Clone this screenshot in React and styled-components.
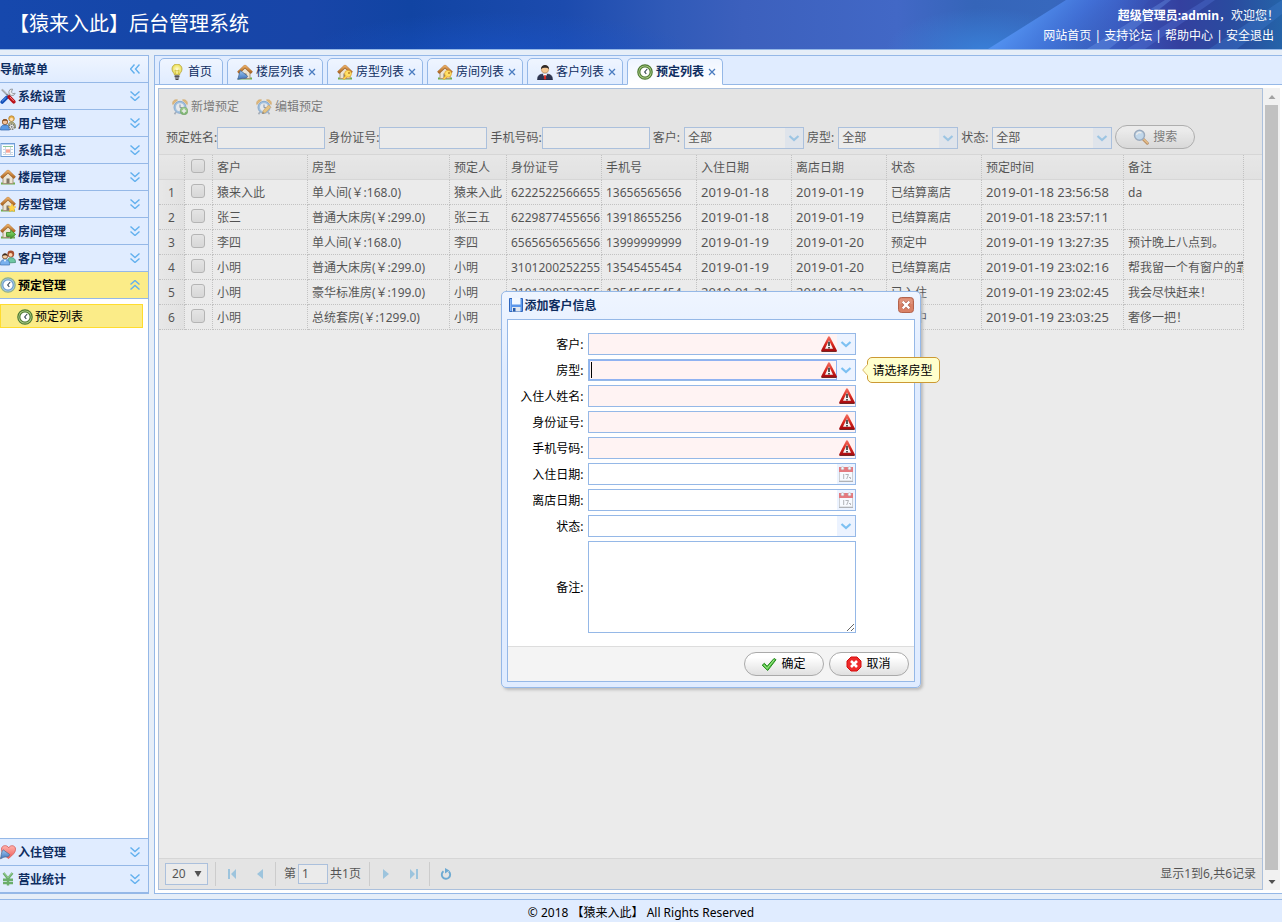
import React from "react";
import styled, { createGlobalStyle, css } from "styled-components";

const LINE = "#95b8e7";
const PANEL = "#e0ecff";
const NAVY = "#0e2d5f";
const FONT = '"Noto Sans", "Noto Sans CJK SC", sans-serif';

const GlobalStyle = createGlobalStyle`
  *, *::before, *::after { box-sizing: border-box; }
  body { margin: 0; background: #e6eef8; color: #000; font: 12px/20px ${FONT}; }
  button, input, select, textarea { margin: 0; color: inherit; font: inherit; border-radius: 0; outline: none; }
  a { color: inherit; text-decoration: none; }
  svg { display: block; flex: none; }
`;

/* ---------- page frame ---------- */

const Page = styled.div`
  display: flex;
  flex-direction: column;
  height: 100vh;
  min-height: 640px;
`;

const Header = styled.header`
  position: relative;
  flex: none;
  display: flex;
  align-items: center;
  justify-content: space-between;
  height: 50px;
  padding: 0 3px 2px 9px;
  overflow: hidden;
  color: #fff;
  background: #1246a9;
  border-bottom: 1px solid ${LINE};
`;

const HeaderArt = styled.svg`
  position: absolute;
  inset: 0;
  width: 100%;
  height: 100%;
`;

const SiteTitle = styled.h1`
  position: relative;
  margin: 0;
  font-size: 20px;
  font-weight: 400;
`;

const UserArea = styled.div`
  position: relative;
  padding-top: 4px;
  text-align: right;
  white-space: pre;
`;

const TopLinks = styled.nav`
  padding-right: 5px;
`;

const Main = styled.div`
  flex: 1;
  display: flex;
  gap: 5px;
  min-height: 0;
  margin: 5px 0;
`;

const Footer = styled.footer`
  flex: none;
  height: 23px;
  padding-top: 3px;
  text-align: center;
  background: ${PANEL};
  border-top: 1px solid ${LINE};
`;

/* ---------- sidebar ---------- */

const Sidebar = styled.aside`
  flex: none;
  display: flex;
  flex-direction: column;
  width: 149px;
  background: #fff;
  border: solid ${LINE};
  border-width: 1px 1px 1px 0;
`;

const SideRow = styled.button`
  flex: none;
  display: flex;
  align-items: center;
  gap: 2px;
  width: 100%;
  height: 27px;
  padding: 0 8px 0 0;
  border: 0;
  border-bottom: 1px solid ${LINE};
  color: ${(p) => (p.$active ? "#000" : NAVY)};
  background: ${(p) => (p.$active ? "#fbec88" : PANEL)};
  font-weight: 700;
  text-align: left;
  cursor: pointer;

  span { flex: 1; padding-top: 1px; }
`;

const SideHead = styled(SideRow).attrs({ as: "div" })`
  background: linear-gradient(#eff5ff, ${PANEL});
  cursor: default;
`;

const SideContent = styled.div`
  flex: 1;
  padding: 5px 5px 5px 0;
  border-bottom: 1px solid ${LINE};
`;

const SubItem = styled.a`
  display: flex;
  align-items: center;
  gap: 2px;
  height: 24px;
  padding: 1px 0 0 16px;
  border: 1px solid #ffdc2e;
  background: #fbec88;
`;

/* ---------- tabs ---------- */

const Center = styled.main`
  flex: 1;
  display: flex;
  flex-direction: column;
  min-width: 0;
  background: #fff;
  border: solid ${LINE};
  border-width: 1px 0 1px 1px;
`;

const TabStrip = styled.div`
  flex: none;
  display: flex;
  gap: 4px;
  height: 29px;
  padding: 2px 0 0 4px;
  background: ${PANEL};
  border-bottom: 1px solid ${LINE};
`;

const Tab = styled.div`
  display: flex;
  align-items: center;
  height: 27px;
  padding: 0 10px 0 9px;
  color: ${NAVY};
  background: linear-gradient(#eff5ff, ${PANEL});
  border: 1px solid ${LINE};
  border-radius: 5px 5px 0 0;
  ${(p) =>
    p.$closable &&
    css`
      padding-right: 6px;
    `}
  ${(p) =>
    p.$active &&
    css`
      font-weight: 700;
      background: linear-gradient(#eff5ff, #fff);
      border-bottom-color: #fff;
    `}
`;

const TabLabel = styled.button`
  display: flex;
  align-items: center;
  gap: 3px;
  padding: 0;
  border: 0;
  background: none;
  font-weight: inherit;
  white-space: nowrap;
  cursor: pointer;
`;

const TabClose = styled.button`
  display: flex;
  align-items: center;
  justify-content: flex-end;
  width: 12px;
  height: 16px;
  padding: 0;
  border: 0;
  background: none;
`;

/* ---------- work area ---------- */

const Body = styled.div`
  flex: 1;
  display: flex;
  min-height: 0;
  padding: 3px 2px 3px 3px;
`;

const Panel = styled.section`
  position: relative;
  flex: 1;
  display: flex;
  flex-direction: column;
  min-width: 0;
  background: #fff;
  border: 1px solid ${LINE};
`;

const Toolbar = styled.div`
  flex: none;
  height: 66px;
  background: #f4f4f4;
  border-bottom: 1px solid #ddd;
`;

const Actions = styled.div`
  display: flex;
  gap: 17px;
  padding: 8px 13px 0;
`;

const LinkButton = styled.button`
  display: flex;
  align-items: center;
  gap: 3px;
  height: 20px;
  padding: 0;
  border: 0;
  color: #444;
  background: none;
`;

const Filters = styled.form`
  display: flex;
  align-items: flex-end;
  gap: 3px;
  margin-top: 8px;
  padding-left: 7px;
`;

const Filter = styled.label`
  display: flex;
  align-items: center;
  gap: ${(p) => (p.$spaced ? "4px" : "0")};
  white-space: nowrap;
`;

const FilterInput = styled.input`
  width: 108px;
  height: 22px;
  padding: 0 3px;
  background: #fff;
  border: 1px solid ${LINE};
`;

const PillButton = styled.button`
  display: flex;
  align-items: center;
  justify-content: center;
  gap: 4px;
  width: 80px;
  height: 24px;
  padding: 0;
  color: ${(p) => (p.$muted ? "#444" : "#000")};
  background: linear-gradient(#fff 20%, #e0e0e0);
  border: 1px solid ${(p) => (p.$muted ? "#999" : "#aaa")};
  border-radius: 12px;
`;

const SearchSlot = styled.div`
  align-self: flex-start;
`;

/* ---------- drop-downs and text boxes ---------- */

const Frame = styled.div`
  position: relative;
  display: grid;
  grid-template: 20px / 1fr 18px;
  width: ${(p) => p.$width}px;
  height: 22px;
  background: ${(p) => (p.$required ? "#fff3f3" : "#fff")};
  border: 1px solid ${LINE};

  > * { grid-row: 1; }
`;

const control = css`
  grid-column: 1 / 3;
  width: 100%;
  min-width: 0;
  height: 20px;
  padding: 0 3px;
  border: 0;
  background: transparent;
  appearance: none;
`;

const SelectControl = styled.select`
  ${control}
`;

const TextControl = styled.input`
  ${control}
`;

const Addon = styled.span`
  grid-column: 2;
  display: grid;
  place-items: center;
  background: #ecf3ff;
  pointer-events: none;
`;

const Warn = styled.span`
  grid-column: ${(p) => (p.$inner ? 1 : 2)};
  justify-self: end;
  align-self: center;
  pointer-events: none;
`;

const FocusRing = styled.span`
  grid-column: 1;
  border: 1px solid #8fb2f2;
  pointer-events: none;

  &::after {
    content: "";
    display: block;
    width: 1px;
    height: 16px;
    margin: 1px;
    background: #000;
  }
`;

/* ---------- grid ---------- */

const GridArea = styled.div`
  flex: 1;
  min-height: 0;
  overflow: hidden;
`;

const Table = styled.table`
  width: 100%;
  table-layout: fixed;
  border-collapse: separate;
  border-spacing: 0;
`;

const cell = css`
  height: 25px;
  padding: 2px 4px 0;
  overflow: hidden;
  font-weight: 400;
  text-align: left;
  white-space: nowrap;
  border-right: 1px dotted #bbb;

  &:last-child { border-right: 0; }
`;

const Th = styled.th`
  ${cell}
  background: linear-gradient(#f9f9f9, #efefef);
  border-bottom: 1px solid #ddd;
`;

const Td = styled.td`
  ${cell}
  padding-top: ${(p) => (p.$date ? "0" : "2px")};
  border-bottom: 1px dotted #bbb;
  font-size: ${(p) => (p.$date ? "13px" : "12px")};

  &:last-child { border-bottom: 0; }
`;

const NumberCell = styled(Td)`
  padding: 2px 0 0;
  text-align: center;
  background: linear-gradient(90deg, #f9f9f9, #efefef);
`;

const Tick = styled.input`
  display: block;
  width: 14px;
  height: 14px;
  margin: 0 0 4px 2px;
  appearance: none;
  background: linear-gradient(#f4f4f4, #dedede);
  border: 1px solid #a4a4a4;
  border-radius: 3px;
`;

/* ---------- pager ---------- */

const Pager = styled.div`
  flex: none;
  display: flex;
  align-items: center;
  height: 31px;
  padding: 0 6px;
  background: #f4f4f4;
  border-top: 1px solid #ddd;
`;

const PageSize = styled.label`
  position: relative;
  width: 43px;
  height: 22px;
  margin-right: 7px;

  svg { position: absolute; right: 6px; top: 7px; pointer-events: none; }
`;

const PageSizeSelect = styled.select`
  width: 100%;
  height: 100%;
  padding: 0 6px;
  appearance: none;
  background: #fff;
  border: 1px solid ${LINE};
`;

const PagerRule = styled.span`
  width: 1px;
  height: 24px;
  background: #ccc;
`;

const PagerButton = styled.button`
  display: grid;
  place-items: center;
  width: 28px;
  height: 24px;
  padding: 0;
  border: 0;
  background: none;
`;

const PagerGroup = styled.div`
  display: flex;
  align-items: center;
  padding: 0 1px 0 2px;
`;

const PageNo = styled.label`
  display: flex;
  align-items: center;
  gap: 2px;
  padding: 0 8px;
`;

const PageInput = styled.input`
  width: 30px;
  height: 20px;
  padding: 0 3px;
  background: #fff;
  border: 1px solid ${LINE};
`;

const PagerInfo = styled.div`
  margin-left: auto;
`;

/* ---------- scrollbar ---------- */

const ScrollTrack = styled.div`
  flex: none;
  display: flex;
  flex-direction: column;
  align-items: center;
  width: 17px;
  background: #f1f1f1;
`;

const ScrollArrow = styled.span`
  display: grid;
  place-items: center;
  width: 17px;
  height: 17px;
`;

const ScrollThumb = styled.span`
  flex: 1;
  width: 13px;
  margin-bottom: 3px;
  background: #c1c1c1;
`;

/* ---------- dialog ---------- */

const Mask = styled.div`
  position: absolute;
  inset: -1px;
  background: #ccc;
  opacity: 0.4;
`;

const DialogLayer = styled.div`
  position: absolute;
  inset: 0;
  display: flex;
  align-items: center;
  justify-content: center;
`;

const Dialog = styled.div`
  width: 420px;
  padding: 5px;
  background: linear-gradient(#eff5ff, ${PANEL} 20%);
  border: 1px solid ${LINE};
  border-radius: 5px;
  box-shadow: 2px 2px 3px #bbb;
`;

const DialogTitle = styled.div`
  display: flex;
  align-items: center;
  height: 22px;
  padding: 0 1px 5px 2px;
  color: ${NAVY};
  font-weight: 700;

  h2 { flex: 1; margin: 0; padding-top: 1px; font-size: 12px; }
`;

const CloseButton = styled.button`
  display: block;
  padding: 0;
  border: 0;
  background: none;
`;

const DialogBox = styled.div`
  background: #fff;
  border: 1px solid ${LINE};
`;

const Form = styled.form`
  display: grid;
  gap: 4px;
  padding: 13px 0;
`;

const Field = styled.div`
  display: grid;
  grid-template-columns: 76px 268px;
  gap: 4px;
  align-items: center;

  > label { padding-top: 2px; text-align: right; }
`;

const Remark = styled.textarea`
  display: block;
  width: 268px;
  height: 92px;
  padding: 3px;
  background: #fff;
  border: 1px solid ${LINE};
`;

const DialogFooter = styled.div`
  display: flex;
  justify-content: flex-end;
  gap: 5px;
  padding: 5px;
  background: #f4f4f4;
  border-top: 1px solid #ddd;
`;

const Tip = styled.div`
  position: absolute;
  left: 278px;
  top: -3px;
  height: 26px;
  padding: 3px 6px 0 5px;
  white-space: nowrap;
  background: #ffffcc;
  border: 1px solid #cc9933;
  border-radius: 5px;

  svg { position: absolute; left: -6px; top: 6px; }
`;

/* ---------- icons ---------- */

const Svg = ({ size = 16, children, ...rest }) => (
  <svg width={size} height={size} viewBox={`0 0 ${size} ${size}`} fill="none" aria-hidden="true" {...rest}>
    {children}
  </svg>
);

const HiddenDefs = styled.svg`
  position: absolute;
  width: 0;
  height: 0;
`;

const Defs = () => (
  <HiddenDefs aria-hidden="true">
    <defs>
      <linearGradient id="red" x2="0" y2="1"><stop stopColor="#f0685a" /><stop offset=".5" stopColor="#dc2a20" /><stop offset="1" stopColor="#a80c10" /></linearGradient>
      <linearGradient id="roof" x2="0" y2="1"><stop stopColor="#e8ad66" /><stop offset="1" stopColor="#b26a26" /></linearGradient>
      <linearGradient id="green" x2="0" y2="1"><stop stopColor="#8fdc72" /><stop offset="1" stopColor="#3c9a2a" /></linearGradient>
      <linearGradient id="blue" x2="0" y2="1"><stop stopColor="#9cc7f2" /><stop offset="1" stopColor="#3f74bd" /></linearGradient>
      <linearGradient id="heart" x2="0" y2="1"><stop stopColor="#ffb3ad" /><stop offset="1" stopColor="#ee5a58" /></linearGradient>
      <radialGradient id="bulb"><stop stopColor="#fffde0" /><stop offset="1" stopColor="#ecdf4c" /></radialGradient>
    </defs>
  </HiddenDefs>
);

const HouseShape = () => (
  <>
    <path d="M1 14.5h14" stroke="#6fae4c" strokeWidth="2" />
    <path d="M3 8l5-4.600L13 8v6.500H3z" fill="#ece4d4" stroke="#a9977d" />
    <path d="M6.500 14.500V9.500h3v5z" fill="#7f7466" />
    <path d="M1.200 8.800L8 2.400l6.800 6.400" stroke="#a5682c" strokeWidth="3" strokeLinejoin="round" />
    <path d="M1.400 8.300L8 2.100l6.600 6.200" stroke="url(#roof)" strokeWidth="2" strokeLinejoin="round" />
  </>
);

const House = () => <Svg><HouseShape /></Svg>;
const HouseStar = () => (
  <Svg><HouseShape /><path d="M12 7.800l1.300 2.600 2.700.4-2 2 .5 2.900-2.500-1.300-2.500 1.300.5-2.900-2-2 2.700-.4z" fill="#ffd54a" stroke="#f0b12c" strokeWidth=".5" /></Svg>
);
const HouseGo = () => (
  <Svg><HouseShape /><path d="M6.500 9.500h4.200V7.200L15.600 11.400l-4.900 4.200v-2.300H6.500z" fill="url(#green)" stroke="#388421" strokeWidth=".8" /></Svg>
);
const HouseKey = () => (
  <Svg>
    <HouseShape />
    <circle cx="11" cy="9.800" r="3.400" fill="#ffe067" stroke="#e0a632" strokeWidth=".8" />
    <circle cx="12" cy="8.900" r="1" fill="#b98426" />
    <path d="M8.800 11.500l-3 3.100 1.500 1 3.100-3" fill="#ffd34d" stroke="#e0a632" strokeWidth=".7" />
  </Svg>
);
const HousePaint = () => (
  <Svg><HouseShape /><path d="M3.500 6.500l7.300 5.800c-1 2.400-3.600 2-5.400 2.100-1.600 0-2.800.8-4.900.9C2 13.200 1.600 9.600 3.500 6.500z" fill="url(#blue)" stroke="#43648e" strokeWidth=".7" /></Svg>
);
const Tools = () => (
  <Svg>
    <path d="M12.500 1a3.300 3.300 0 1 0 2.700 4.300l-2.400.3-1.300-1.500z" fill="#e9ecef" stroke="#858a91" strokeWidth=".8" />
    <path d="M1.800 1.300l7.500 7.500" stroke="#7f858c" strokeWidth="1.700" />
    <path d="M1.600 1l5 5" stroke="#eef0f2" strokeWidth=".7" />
    <path d="M10 6.500L7.300 9" stroke="#9da2a8" strokeWidth="1.800" />
    <path d="M7 9.300L2.200 14" stroke="#1450b8" strokeWidth="3.600" strokeLinecap="round" />
    <path d="M6.300 9.300L2 13.400" stroke="#6da3f4" strokeWidth="1" />
    <path d="M9.200 8.900l4.600 4.900" stroke="#b80f17" strokeWidth="3.600" strokeLinecap="round" />
    <path d="M9.900 9l4 4.200" stroke="#ff8a86" strokeWidth="1" />
  </Svg>
);
const Users = () => (
  <Svg>
    <circle cx="11.500" cy="3.600" r="2.800" fill="#e9b24c" stroke="#a8752a" strokeWidth=".7" />
    <circle cx="11.500" cy="4.300" r="1.600" fill="#ffe0b8" />
    <path d="M8 13c0-5 1.500-6 3.500-6s4 1 4 6z" fill="#b8b58a" stroke="#77784f" strokeWidth=".7" />
    <circle cx="5" cy="7" r="2.700" fill="#f2c298" stroke="#885022" strokeWidth=".8" />
    <path d="M2.400 6.300C3 3.300 7 3.300 7.600 6.300 6 5.500 4 5.500 2.400 6.300z" fill="#8d5426" />
    <path d="M.5 15c0-4 1.500-5 4.500-5s4.500 1 4.500 5z" fill="#5b9ae4" stroke="#2d63aa" strokeWidth=".7" />
    <circle cx="11.700" cy="11.800" r="2.600" fill="#e8e8e8" stroke="#767676" strokeWidth="1.300" strokeDasharray="1.500 .7" />
    <circle cx="11.700" cy="11.800" r=".9" fill="#777" />
  </Svg>
);
const Clients = () => (
  <Svg>
    <circle cx="10.800" cy="4" r="3.400" fill="#a84f30" />
    <circle cx="10.600" cy="4.800" r="1.900" fill="#ffd5ad" />
    <path d="M7.500 13c0-4.500 1.200-5.300 3.500-5.300s4.500.8 4.500 4.800z" fill="#6fc7a3" stroke="#378467" strokeWidth=".7" />
    <circle cx="5" cy="6.300" r="2.600" fill="#f7cda2" stroke="#6e4a2c" strokeWidth=".8" />
    <path d="M2.300 6c.3-3.500 5-3.500 5.400 0C6.500 5 4 4.900 2.300 6z" fill="#3b2a1e" />
    <path d="M.4 15c0-4.500 1.600-5.300 4.600-5.300s4.600.8 4.600 5.300z" fill="#79b1ee" stroke="#3b71b3" strokeWidth=".7" />
    <path d="M3.800 9.800L5 12l1.200-2.200z" fill="#fff" />
  </Svg>
);
const Log = () => (
  <Svg>
    <rect x="1" y="1.500" width="13.500" height="13" fill="#fff" stroke="#6f9dd6" />
    <path d="M2 2.500h12" stroke="#bdd7f5" />
    <path d="M3 7.500h10M3 10.500h10M3 12.500h10M5.500 5v8M10.500 5v8" stroke="#ccd6e2" />
    <path d="M6 7h4v4H6z" fill="#ffc3b8" />
    <path d="M6 9h4" stroke="#f58575" />
    <path d="M3 4.500h10" stroke="#8cc79a" />
  </Svg>
);
const Clock = ({ ring = "#6d9ccc", inner = "#a8cbe8", edge = "#8fb08a" }) => (
  <Svg>
    <circle cx="8" cy="8" r="7.200" fill={inner} stroke={edge} strokeWidth="1.200" />
    <circle cx="8" cy="8" r="5.200" fill="#fff" stroke={ring} strokeWidth="1.200" />
    <path d="M10.200 5L7.700 8l1.600 1.800" stroke="#345" strokeWidth="1.100" />
  </Svg>
);
const BlueClock = () => <Clock />;
const GreenClock = () => <Clock ring="#4f7b35" inner="#b3d389" edge="#4d7a34" />;
const HeartIcon = () => (
  <Svg>
    <path d="M8.500 14.500C3 10.500 1.500 8 1.500 5.200 1.500 1 7 .5 8.700 3.800 10.300.5 15.600 1.200 15.500 5.200c0 2.800-2 5.300-7 9.300z" fill="url(#heart)" stroke="#d75650" strokeWidth=".8" />
    <path d="M3.200 5.800l6.500 4.700c-.6 2.600-3 2.400-4.700 2.500C3.300 13 2 14.500.3 14.800 1.600 12 .8 8.300 3.200 5.800z" fill="url(#blue)" stroke="#53688b" strokeWidth=".7" />
  </Svg>
);
const Yen = () => (
  <Svg><path d="M3.500 2L8 7.500 12.500 2M8 7v7.500M3 8.800h10M3 12h10" stroke="#6bae6b" strokeWidth="2.400" /><path d="M4 2l4 4.800L12 2" stroke="#a3d3a0" strokeWidth=".8" /></Svg>
);
const Bulb = () => (
  <Svg>
    <path d="M5.500 11c0-2-2.500-3-2.500-6a5 5 0 0 1 10 0c0 3-2.500 4-2.500 6z" fill="url(#bulb)" stroke="#b9a94a" strokeWidth=".9" />
    <path d="M6.500 10L6 6l2 1 2-1-.5 4" stroke="#cdbb38" strokeWidth=".8" />
    <rect x="5.800" y="10.800" width="4.400" height="4.200" rx="1" fill="#8a8a90" />
    <path d="M5.500 12.300h5M6.500 15.500h3" stroke="#46464c" />
  </Svg>
);
const Person = () => (
  <Svg>
    <path d="M.5 16c0-5 2-6 7.500-6s7.500 1 7.500 6z" fill="#2d3552" stroke="#1b2138" strokeWidth=".5" />
    <path d="M5.800 9.800L8 14.500l2.200-4.700z" fill="#fff" />
    <path d="M7.400 11h1.200l.7 3.500L8 16l-1.300-1.500z" fill="#d42a22" />
    <circle cx="8" cy="5.300" r="3.700" fill="#f6c994" stroke="#b3824c" strokeWidth=".6" />
    <path d="M4 5.200C3.500-.5 12.500-.5 12 5.200 10.500 3.300 6 3.300 4 5.200z" fill="#2f2a28" />
  </Svg>
);
const AlarmShape = () => (
  <>
    <path d="M.8 5.500C.2 2 2.500.3 5.500 1zM15.200 5.500C15.800 2 13.500.3 10.500 1z" fill="#eeb04a" stroke="#d28e2a" strokeWidth=".8" />
    <path d="M4 13l-1.500 2.300M12 13l1.500 2.300" stroke="#8c9aab" strokeWidth="1.600" />
    <circle cx="8" cy="8.300" r="6" fill="#86b9ea" stroke="#5b93cf" />
    <circle cx="8" cy="8.300" r="4" fill="#f7fbff" />
    <path d="M8 5.500v3.200h2.300" stroke="#4a6687" />
  </>
);
const AlarmAdd = () => (
  <Svg><AlarmShape /><circle cx="12" cy="12" r="3.800" fill="url(#green)" stroke="#3f8d2e" strokeWidth=".7" /><path d="M12 9.800v4.400M9.800 12h4.400" stroke="#fff" strokeWidth="1.500" /></Svg>
);
const AlarmEdit = () => (
  <Svg><AlarmShape /><path d="M6.500 14.500l.9-3.200 5.300-5.200 2.200 2.200-5.300 5.300z" fill="#f6bf52" stroke="#c98b34" strokeWidth=".8" /><path d="M6.300 14.800l.5-1.800 1.400 1.300z" fill="#333" /></Svg>
);
const Magnifier = () => (
  <Svg>
    <path d="M10.300 10.300l4 3.900" stroke="#a9621d" strokeWidth="3" strokeLinecap="round" />
    <path d="M10.600 10.200l3.800 3.700" stroke="#f3b25a" strokeWidth="1.500" strokeLinecap="round" />
    <circle cx="6.500" cy="6.300" r="5" fill="#b9defd" stroke="#7b95b5" strokeWidth="1.500" />
    <path d="M3.500 5.800c.5-2 3-3 5-1.800" stroke="#fff" strokeWidth="1.400" />
  </Svg>
);
const Save = () => (
  <Svg>
    <path d="M.5 1.500h13v13H.5z" fill="#5b96ea" stroke="#2f66bd" />
    <path d="M3 1h8.500v6.500H3z" fill="#f3f8ff" />
    <path d="M1.500 2v12" stroke="#8ab6f5" />
    <path d="M3 10h8.500v4.500H3z" fill="#e3e8ef" />
    <path d="M4 11h2.500v3.500H4z" fill="#255aa9" />
  </Svg>
);
const Close = () => (
  <Svg>
    <rect x=".5" y=".5" width="15" height="15" rx="3" fill="#d98166" stroke="#b3634c" />
    <path d="M1.500 3.500a2 2 0 0 1 2-2h9a2 2 0 0 1 2 2V7h-13z" fill="#e39b84" opacity=".7" />
    <path d="M4.700 4.700l6.600 6.600M11.300 4.700l-6.600 6.600" stroke="#a35441" strokeWidth="3.600" />
    <path d="M4.700 4.700l6.600 6.600M11.300 4.700l-6.600 6.600" stroke="#fff" strokeWidth="2.400" />
  </Svg>
);
const Warning = () => (
  <Svg>
    <path d="M8 1.300L14.900 14.600H1.100z" fill="url(#red)" stroke="url(#red)" strokeWidth="2" strokeLinejoin="round" />
    <path d="M.5 15.500h15" stroke="#5a1010" strokeWidth=".8" />
    <path d="M8 4.300l4 8.500H4z" fill="#f4f4f4" />
    <path d="M8 5.800v4.200M8 11v1.500" stroke="#222" strokeWidth="1.500" />
  </Svg>
);
const Calendar = () => (
  <Svg opacity=".6">
    <rect x="1.500" y="1.500" width="13" height="13.500" fill="#fff" stroke="#b9b9b9" />
    <path d="M1 1h14v5H1z" fill="#e02b2b" />
    <circle cx="4.500" cy="2.200" r="1.500" fill="#fff" stroke="#999" strokeWidth=".7" />
    <circle cx="11.500" cy="2.200" r="1.500" fill="#fff" stroke="#999" strokeWidth=".7" />
    <path d="M5.700 8v5M7.500 8.500h3L8.700 13M11 11.500h1.500v1.500" stroke="#8b8b8b" />
    <path d="M1 15.500h14" stroke="#888" />
  </Svg>
);
const Check = () => (
  <Svg><path d="M1.200 9.200L3.400 7.300l2.700 3L13 2.500l2 1.200L6.700 14.500z" fill="#52c043" stroke="#248a1d" strokeLinejoin="round" /><path d="M2.800 8.900l3.300 3.600 7.200-8.900" stroke="#a5ea8e" /></Svg>
);
const Cancel = () => (
  <Svg>
    <path d="M5 1h6l4 4v6l-4 4H5l-4-4V5z" fill="#ee2b2b" stroke="#d50e0e" strokeLinejoin="round" />
    <path d="M5 5l6 6M11 5l-6 6" stroke="#fff" strokeWidth="2.600" />
  </Svg>
);
const Chevron = () => <Svg size={12}><path d="M1.500 4L6 8l4.500-4" stroke="#7cc0f2" strokeWidth="2.200" /></Svg>;
const DoubleChevron = ({ turn = 0 }) => (
  <Svg size={10} transform={`rotate(${turn})`}><path d="M.5.5L5 4.500 9.500.5M.5 5.500L5 9.500l4.500-4" stroke="#62b0ee" strokeWidth="1.400" /></Svg>
);
const SmallX = () => <Svg size={8}><path d="M1 1l6 6M7 1L1 7" stroke="#4a7cc0" strokeWidth="1.300" /></Svg>;
const Down = () => <Svg size={8}><path d="M.5 1h7L4 7z" fill="#000" /></Svg>;
const pagerBlue = "#7dbfe8";
const First = () => <Svg size={10}><path d="M1 0h2v10H1zM9 0v10L4 5z" fill={pagerBlue} /></Svg>;
const Prev = () => <Svg size={10}><path d="M8 0v10L2 5z" fill={pagerBlue} /></Svg>;
const Next = () => <Svg size={10}><path d="M2 0v10l6-5z" fill={pagerBlue} /></Svg>;
const Last = () => <Svg size={10}><path d="M9 0H7v10h2zM1 0v10l5-5z" fill={pagerBlue} /></Svg>;
const Refresh = () => (
  <Svg size={12}><path d="M3.500 3.200A4.200 4.200 0 1 0 8.800 3.500" stroke="#2f93d6" strokeWidth="1.900" /><path d="M5 0l4.500 2.600L5 5.500z" fill="#2f93d6" /></Svg>
);

/* ---------- data ---------- */

const topMenus = [
  ["系统设置", Tools],
  ["用户管理", Users],
  ["系统日志", Log],
  ["楼层管理", House],
  ["房型管理", HouseStar],
  ["房间管理", HouseGo],
  ["客户管理", Clients],
  ["预定管理", BlueClock],
];
const bottomMenus = [
  ["入住管理", HeartIcon],
  ["营业统计", Yen],
];
const tabs = [
  ["首页", Bulb],
  ["楼层列表", HousePaint],
  ["房型列表", HouseKey],
  ["房间列表", HouseKey],
  ["客户列表", Person],
  ["预定列表", GreenClock],
];
const columns = [
  ["客户", 95],
  ["房型", 142],
  ["预定人", 57],
  ["身份证号", 95],
  ["手机号", 95],
  ["入住日期", 95],
  ["离店日期", 95],
  ["状态", 95],
  ["预定时间", 142],
  ["备注", 120],
];
const dateColumns = [5, 6, 8];
const rows = [
  ["猿来入此", "单人间(￥:168.0)", "猿来入此", "6222522566655", "13656565656", "2019-01-18", "2019-01-19", "已结算离店", "2019-01-18 23:56:58", "da"],
  ["张三", "普通大床房(￥:299.0)", "张三五", "6229877455656", "13918655256", "2019-01-18", "2019-01-19", "已结算离店", "2019-01-18 23:57:11", ""],
  ["李四", "单人间(￥:168.0)", "李四", "6565656565656", "13999999999", "2019-01-19", "2019-01-20", "预定中", "2019-01-19 13:27:35", "预计晚上八点到。"],
  ["小明", "普通大床房(￥:299.0)", "小明", "3101200252255", "13545455454", "2019-01-19", "2019-01-20", "已结算离店", "2019-01-19 23:02:16", "帮我留一个有窗户的靠"],
  ["小明", "豪华标准房(￥:199.0)", "小明", "3101200252255", "13545455454", "2019-01-21", "2019-01-22", "已入住", "2019-01-19 23:02:45", "我会尽快赶来！"],
  ["小明", "总统套房(￥:1299.0)", "小明", "3101200252255", "13545455454", "2019-01-21", "2019-01-22", "预定中", "2019-01-19 23:03:25", "奢侈一把！"],
];
const fields = [
  { id: "client", label: "客户", kind: "select", required: true },
  { id: "roomType", label: "房型", kind: "select", required: true, focused: true, tip: "请选择房型" },
  { id: "guest", label: "入住人姓名", kind: "text", required: true },
  { id: "idCard", label: "身份证号", kind: "text", required: true },
  { id: "phone", label: "手机号码", kind: "text", required: true },
  { id: "arrive", label: "入住日期", kind: "date" },
  { id: "leave", label: "离店日期", kind: "date" },
  { id: "state", label: "状态", kind: "select" },
];

/* ---------- parts ---------- */

function Banner() {
  return (
    <HeaderArt viewBox="0 0 1282 49" preserveAspectRatio="none" aria-hidden="true">
      <defs>
        <linearGradient id="sky">
          <stop stopColor="#1648ad" />
          <stop offset=".12" stopColor="#1546a8" />
          <stop offset=".24" stopColor="#1845a8" />
          <stop offset=".32" stopColor="#1144a3" />
          <stop offset=".44" stopColor="#1c4bae" />
          <stop offset=".52" stopColor="#305ab8" />
          <stop offset=".58" stopColor="#3c60bd" />
          <stop offset=".7" stopColor="#4268c6" />
          <stop offset=".76" stopColor="#3565b9" />
          <stop offset=".82" stopColor="#3768bd" />
          <stop offset=".87" stopColor="#3a5cc0" />
          <stop offset=".92" stopColor="#34409f" />
          <stop offset=".96" stopColor="#2a4b9f" />
          <stop offset="1" stopColor="#2563a8" />
        </linearGradient>
        <linearGradient id="beam" x1="0" y1="0" x2="1" y2=".3">
          <stop offset=".3" stopColor="#5391f0" stopOpacity=".95" />
          <stop offset=".6" stopColor="#4474de" stopOpacity=".7" />
          <stop offset="1" stopColor="#3a5cc0" stopOpacity="0" />
        </linearGradient>
        <radialGradient id="floor">
          <stop stopColor="#1a56cc" stopOpacity=".6" />
          <stop offset="1" stopColor="#1a56cc" stopOpacity="0" />
        </radialGradient>
        <radialGradient id="glow">
          <stop stopColor="#3a83dc" stopOpacity=".9" />
          <stop offset="1" stopColor="#3a83dc" stopOpacity="0" />
        </radialGradient>
      </defs>
      <path d="M0 0h1282v49H0z" fill="url(#sky)" />
      <ellipse cx="500" cy="56" rx="200" ry="44" fill="url(#floor)" />
      <ellipse cx="985" cy="52" rx="100" ry="44" fill="url(#glow)" />
      <path d="M1066 0h84l-50 49H988z" fill="url(#beam)" />
      <path d="M1165 0h6l-62 49h-22z" fill="#6c9cee" opacity=".35" />
      <path d="M1205 0h10l-70 49h-18z" fill="#5b7de0" opacity=".3" />
      <path d="M1282 0v14l-45 35h-28z" fill="#3f7fd0" opacity=".35" />
    </HeaderArt>
  );
}

function SideMenu({ text, icon: Icon, active }) {
  return (
    <SideRow type="button" $active={active}>
      <Icon />
      <span>{text}</span>
      <DoubleChevron turn={active ? 180 : 0} />
    </SideRow>
  );
}

function Combo({ text }) {
  return (
    <Filter $spaced>
      {text}:
      <Frame $width={120}>
        <SelectControl defaultValue="全部"><option>全部</option></SelectControl>
        <Addon><Chevron /></Addon>
      </Frame>
    </Filter>
  );
}

function FormField({ id, label, kind, required, focused, tip }) {
  return (
    <Field>
      <label htmlFor={id}>{label}:</label>
      <Frame $width={268} $required={required}>
        {kind === "select" ? <SelectControl id={id}><option value="" /></SelectControl> : <TextControl id={id} type="text" />}
        {kind === "select" && <Addon><Chevron /></Addon>}
        {kind === "date" && <Addon><Calendar /></Addon>}
        {focused && <FocusRing />}
        {required && <Warn $inner={kind === "select"}><Warning /></Warn>}
        {tip && (
          <Tip role="tooltip">
            <svg width="6" height="12" viewBox="0 0 6 12" aria-hidden="true">
              <path d="M6 0L.7 6 6 12" fill="#ffffcc" stroke="#dcb96a" />
            </svg>
            {tip}
          </Tip>
        )}
      </Frame>
    </Field>
  );
}

function BookingTable() {
  return (
    <Table>
      <colgroup>
        <col width="26" />
        <col width="28" />
        {columns.map(([name, width]) => <col key={name} width={width} />)}
        <col />
      </colgroup>
      <thead>
        <tr>
          <Th />
          <Th><Tick type="checkbox" aria-label="全选" /></Th>
          {columns.map(([name]) => <Th key={name} scope="col">{name}</Th>)}
          <Th />
        </tr>
      </thead>
      <tbody>
        {rows.map((row, r) => (
          <tr key={r}>
            <NumberCell>{r + 1}</NumberCell>
            <Td><Tick type="checkbox" aria-label={`选择第${r + 1}行`} /></Td>
            {row.map((value, c) => <Td key={c} $date={dateColumns.includes(c)}>{value}</Td>)}
            <Td />
          </tr>
        ))}
      </tbody>
    </Table>
  );
}

function AddDialog() {
  return (
    <Dialog role="dialog" aria-labelledby="dialog-title">
      <DialogTitle>
        <Save />
        <h2 id="dialog-title">添加客户信息</h2>
        <CloseButton type="button" aria-label="关闭"><Close /></CloseButton>
      </DialogTitle>
      <DialogBox>
        <Form>
          {fields.map((f) => <FormField key={f.id} {...f} />)}
          <Field>
            <label htmlFor="remark">备注:</label>
            <Remark id="remark" />
          </Field>
        </Form>
        <DialogFooter>
          <PillButton type="button"><Check />确定</PillButton>
          <PillButton type="button"><Cancel />取消</PillButton>
        </DialogFooter>
      </DialogBox>
    </Dialog>
  );
}

export default function App() {
  return (
    <Page>
      <GlobalStyle />
      <Defs />
      <Header>
        <Banner />
        <SiteTitle>【猿来入此】后台管理系统</SiteTitle>
        <UserArea>
          <div><b>超级管理员:admin</b>，欢迎您！</div>
          <TopLinks>
            <a href="#home">网站首页</a> | <a href="#forum">支持论坛</a> | <a href="#help">帮助中心</a> | <a href="#logout">安全退出</a>
          </TopLinks>
        </UserArea>
      </Header>

      <Main>
        <Sidebar>
          <SideHead>
            <span>导航菜单</span>
            <DoubleChevron turn={90} />
          </SideHead>
          {topMenus.map(([text, icon]) => <SideMenu key={text} text={text} icon={icon} active={text === "预定管理"} />)}
          <SideContent>
            <SubItem href="#bookings"><GreenClock />预定列表</SubItem>
          </SideContent>
          {bottomMenus.map(([text, icon]) => <SideMenu key={text} text={text} icon={icon} />)}
        </Sidebar>

        <Center>
          <TabStrip>
            {tabs.map(([text, Icon], i) => (
              <Tab key={text} $active={i === tabs.length - 1} $closable={i > 0}>
                <TabLabel type="button"><Icon />{text}</TabLabel>
                {i > 0 && <TabClose type="button" aria-label={`关闭${text}`}><SmallX /></TabClose>}
              </Tab>
            ))}
          </TabStrip>
          <Body>
            <Panel>
              <Toolbar>
                <Actions>
                  <LinkButton type="button"><AlarmAdd />新增预定</LinkButton>
                  <LinkButton type="button"><AlarmEdit />编辑预定</LinkButton>
                </Actions>
                <Filters>
                  <Filter>预定姓名:<FilterInput type="text" /></Filter>
                  <Filter>身份证号:<FilterInput type="text" /></Filter>
                  <Filter>手机号码:<FilterInput type="text" /></Filter>
                  <Combo text="客户" />
                  <Combo text="房型" />
                  <Combo text="状态" />
                  <SearchSlot><PillButton type="button" $muted><Magnifier />搜索</PillButton></SearchSlot>
                </Filters>
              </Toolbar>
              <GridArea><BookingTable /></GridArea>
              <Pager>
                <PageSize>
                  <PageSizeSelect aria-label="每页条数" defaultValue="20"><option>20</option></PageSizeSelect>
                  <Down />
                </PageSize>
                <PagerRule />
                <PagerGroup>
                  <PagerButton type="button" aria-label="首页"><First /></PagerButton>
                  <PagerButton type="button" aria-label="上一页"><Prev /></PagerButton>
                </PagerGroup>
                <PagerRule />
                <PageNo>第<PageInput type="text" defaultValue="1" />共1页</PageNo>
                <PagerRule />
                <PagerGroup>
                  <PagerButton type="button" aria-label="下一页"><Next /></PagerButton>
                  <PagerButton type="button" aria-label="末页"><Last /></PagerButton>
                </PagerGroup>
                <PagerRule />
                <PagerGroup>
                  <PagerButton type="button" aria-label="刷新"><Refresh /></PagerButton>
                </PagerGroup>
                <PagerInfo>显示1到6,共6记录</PagerInfo>
              </Pager>
              <Mask />
              <DialogLayer><AddDialog /></DialogLayer>
            </Panel>
            <ScrollTrack>
              <ScrollArrow><Svg size={8}><path d="M.5 6h7L4 2z" fill="#a3a3a3" /></Svg></ScrollArrow>
              <ScrollThumb />
              <ScrollArrow><Svg size={8}><path d="M.5 2h7L4 6z" fill="#505050" /></Svg></ScrollArrow>
            </ScrollTrack>
          </Body>
        </Center>
      </Main>

      <Footer>© 2018 【猿来入此】 All Rights Reserved</Footer>
    </Page>
  );
}
